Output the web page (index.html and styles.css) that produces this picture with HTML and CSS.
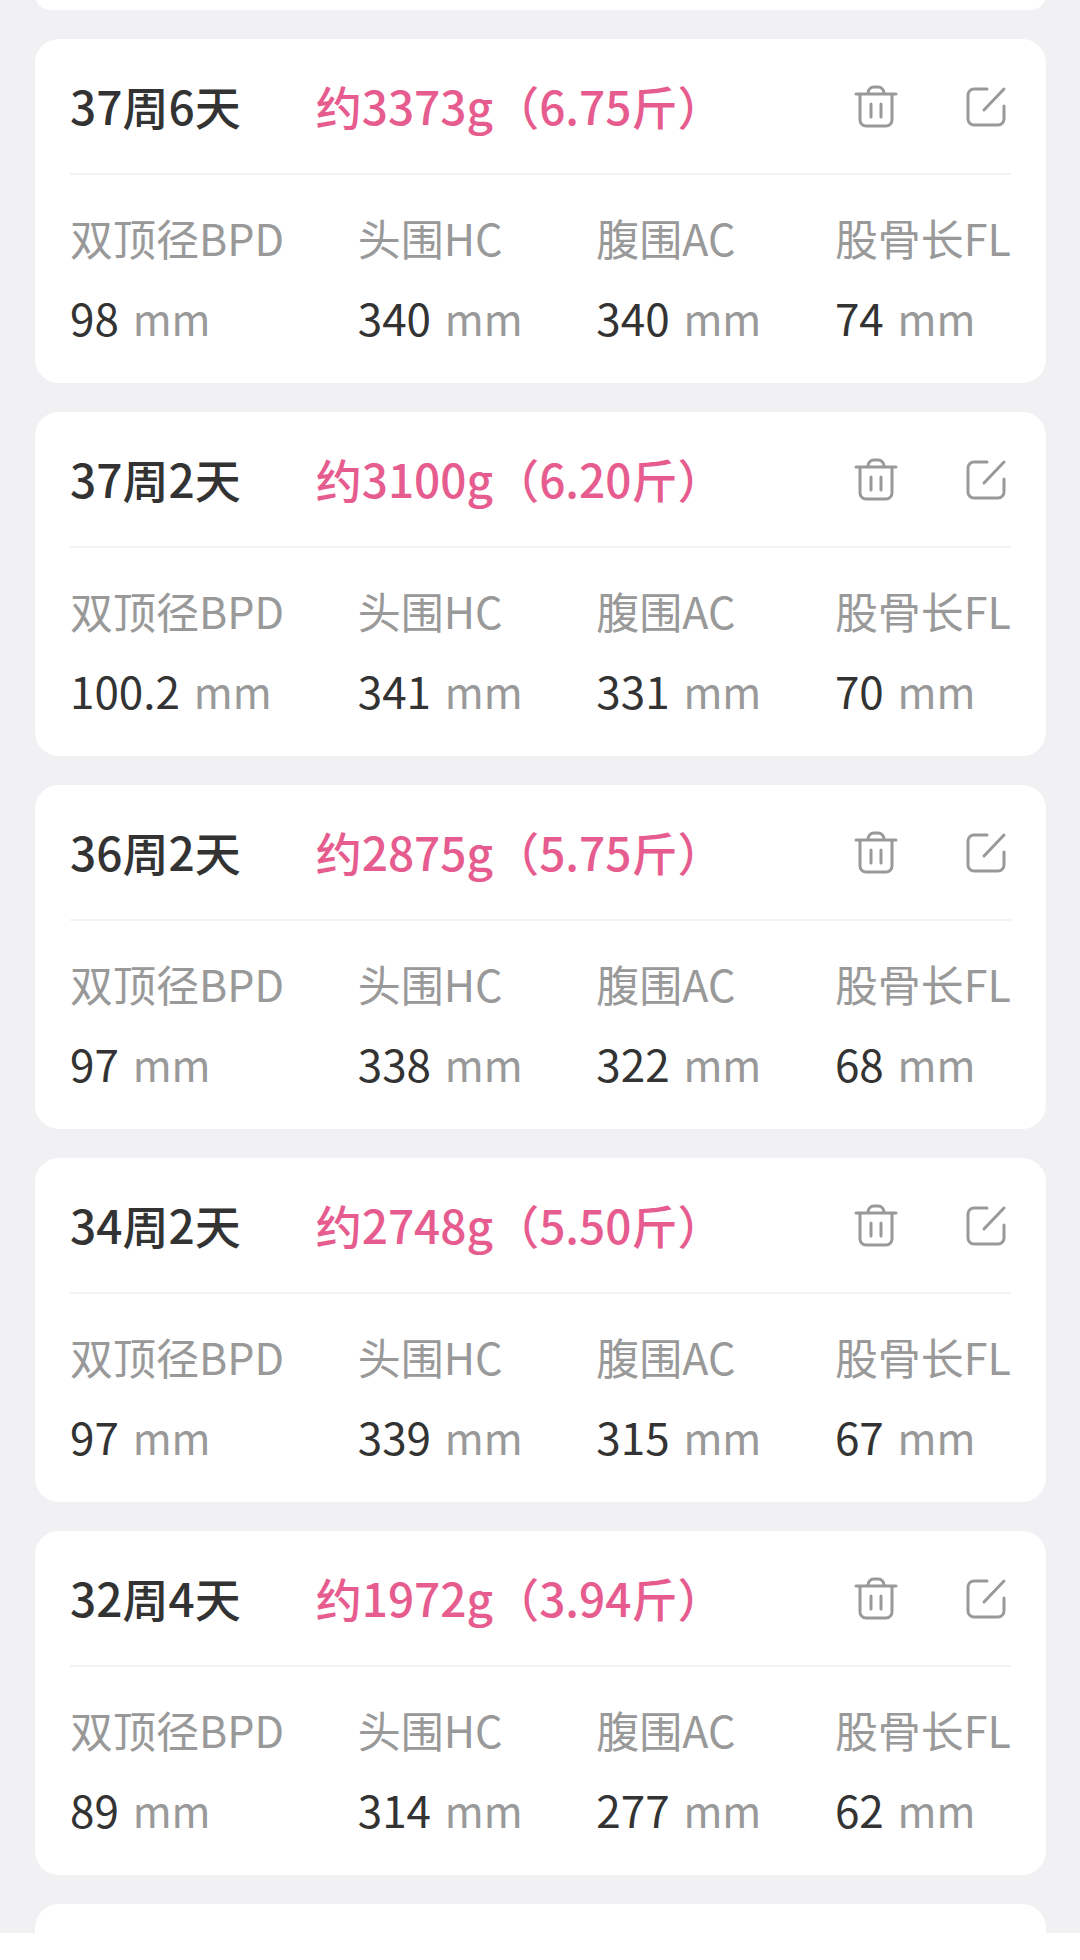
FILE: index.html
```html
<!DOCTYPE html>
<html lang="zh-CN">

<head>
    <meta charset="UTF-8">
    <meta name="viewport" content="width=device-width, initial-scale=1.0">
    <title>胎儿体重记录</title>
    <link rel="stylesheet" href="styles.css">
</head>

<body>
    <svg class="sprite" aria-hidden="true">
        <symbol id="icon-trash" viewBox="0 0 44 44">
            <path d="M2 9H42M6 9V35a6 6 0 0 0 6 6H32a6 6 0 0 0 6-6V9M14 9V8a6 6 0 0 1 6-6h4a6 6 0 0 1 6 6v1M17 19v13M27 19v13" />
        </symbol>
        <symbol id="icon-edit" viewBox="0 0 44 44">
            <path d="M23 4H10a6 6 0 0 0-6 6V34a6 6 0 0 0 6 6H34a6 6 0 0 0 6-6V21M40 4L20 25" />
        </symbol>
    </svg>

    <main class="list">
        <div class="card card-prev"></div>

        <article class="card">
            <header class="card-header">
                <h2 class="week">37周6天</h2>
                <p class="weight">约3373g（6.75斤）</p>
                <button type="button" class="icon-btn" aria-label="删除"><svg class="icon"><use href="#icon-trash" /></svg></button>
                <button type="button" class="icon-btn" aria-label="编辑"><svg class="icon"><use href="#icon-edit" /></svg></button>
            </header>
            <dl class="data">
                <div><dt>双顶径BPD</dt><dd>98 <span class="unit">mm</span></dd></div>
                <div><dt>头围HC</dt><dd>340 <span class="unit">mm</span></dd></div>
                <div><dt>腹围AC</dt><dd>340 <span class="unit">mm</span></dd></div>
                <div><dt>股骨长FL</dt><dd>74 <span class="unit">mm</span></dd></div>
            </dl>
        </article>

        <article class="card">
            <header class="card-header">
                <h2 class="week">37周2天</h2>
                <p class="weight">约3100g（6.20斤）</p>
                <button type="button" class="icon-btn" aria-label="删除"><svg class="icon"><use href="#icon-trash" /></svg></button>
                <button type="button" class="icon-btn" aria-label="编辑"><svg class="icon"><use href="#icon-edit" /></svg></button>
            </header>
            <dl class="data">
                <div><dt>双顶径BPD</dt><dd>100.2 <span class="unit">mm</span></dd></div>
                <div><dt>头围HC</dt><dd>341 <span class="unit">mm</span></dd></div>
                <div><dt>腹围AC</dt><dd>331 <span class="unit">mm</span></dd></div>
                <div><dt>股骨长FL</dt><dd>70 <span class="unit">mm</span></dd></div>
            </dl>
        </article>

        <article class="card">
            <header class="card-header">
                <h2 class="week">36周2天</h2>
                <p class="weight">约2875g（5.75斤）</p>
                <button type="button" class="icon-btn" aria-label="删除"><svg class="icon"><use href="#icon-trash" /></svg></button>
                <button type="button" class="icon-btn" aria-label="编辑"><svg class="icon"><use href="#icon-edit" /></svg></button>
            </header>
            <dl class="data">
                <div><dt>双顶径BPD</dt><dd>97 <span class="unit">mm</span></dd></div>
                <div><dt>头围HC</dt><dd>338 <span class="unit">mm</span></dd></div>
                <div><dt>腹围AC</dt><dd>322 <span class="unit">mm</span></dd></div>
                <div><dt>股骨长FL</dt><dd>68 <span class="unit">mm</span></dd></div>
            </dl>
        </article>

        <article class="card">
            <header class="card-header">
                <h2 class="week">34周2天</h2>
                <p class="weight">约2748g（5.50斤）</p>
                <button type="button" class="icon-btn" aria-label="删除"><svg class="icon"><use href="#icon-trash" /></svg></button>
                <button type="button" class="icon-btn" aria-label="编辑"><svg class="icon"><use href="#icon-edit" /></svg></button>
            </header>
            <dl class="data">
                <div><dt>双顶径BPD</dt><dd>97 <span class="unit">mm</span></dd></div>
                <div><dt>头围HC</dt><dd>339 <span class="unit">mm</span></dd></div>
                <div><dt>腹围AC</dt><dd>315 <span class="unit">mm</span></dd></div>
                <div><dt>股骨长FL</dt><dd>67 <span class="unit">mm</span></dd></div>
            </dl>
        </article>

        <article class="card">
            <header class="card-header">
                <h2 class="week">32周4天</h2>
                <p class="weight">约1972g（3.94斤）</p>
                <button type="button" class="icon-btn" aria-label="删除"><svg class="icon"><use href="#icon-trash" /></svg></button>
                <button type="button" class="icon-btn" aria-label="编辑"><svg class="icon"><use href="#icon-edit" /></svg></button>
            </header>
            <dl class="data">
                <div><dt>双顶径BPD</dt><dd>89 <span class="unit">mm</span></dd></div>
                <div><dt>头围HC</dt><dd>314 <span class="unit">mm</span></dd></div>
                <div><dt>腹围AC</dt><dd>277 <span class="unit">mm</span></dd></div>
                <div><dt>股骨长FL</dt><dd>62 <span class="unit">mm</span></dd></div>
            </dl>
        </article>

        <div class="card card-next"></div>
    </main>

    <footer class="bottom-bar"></footer>
</body>

</html>
```
FILE: styles.css
```css
* {
    box-sizing: border-box;
}

body {
    margin: 0;
    height: 100vh;
    display: flex;
    flex-direction: column;
    background-color: #f1f1f3;
    color: #333;
    font-family: "Noto Sans CJK SC", sans-serif;
}

h2,
p,
dl,
dd {
    margin: 0;
}

.sprite {
    display: none;
}

.list {
    flex: 1;
    min-height: 0;
    display: flex;
    flex-direction: column;
    gap: 29px;
    padding: 0 34px 0 35px;
    overflow: hidden;
}

.card {
    flex-shrink: 0;
    padding: 0 35px;
    border-radius: 24px;
    background-color: #fff;
}

/* cards cut off by the scroll position */
.card-prev {
    height: 30px;
    margin-top: -20px;
}

.card-next {
    height: 344px;
}

.card-header {
    display: flex;
    align-items: center;
    height: 136px;
    border-bottom: 2px solid #f3f3f3;
}

.week,
.weight {
    padding-bottom: 2px;
    font-size: 46px;
    line-height: 64px;
    font-weight: 500;
    white-space: nowrap;
}

.weight {
    flex: 1;
    margin-left: 75px;
    color: #e65c8e;
}

.icon-btn {
    display: flex;
    justify-content: center;
    width: 50px;
    padding: 2px 0 0;
    border: none;
    background: none;
    color: #999;
    cursor: pointer;
}

.icon-btn + .icon-btn {
    margin-left: 60px;
}

.icon {
    width: 44px;
    height: 44px;
    fill: none;
    stroke: currentColor;
    stroke-width: 3;
    stroke-linecap: round;
    stroke-linejoin: round;
}

.data {
    display: flex;
    justify-content: space-between;
    padding: 22px 0 26px;
    font-size: 43px;
    line-height: 80px;
    white-space: nowrap;
}

.data dt,
.unit {
    color: #999;
}

.data dd {
    height: 80px;
    font-size: 44px;
}

.unit {
    margin-left: 4px;
    font-size: 42px;
}

.bottom-bar {
    height: 27px;
    background-color: #fff;
}
```
